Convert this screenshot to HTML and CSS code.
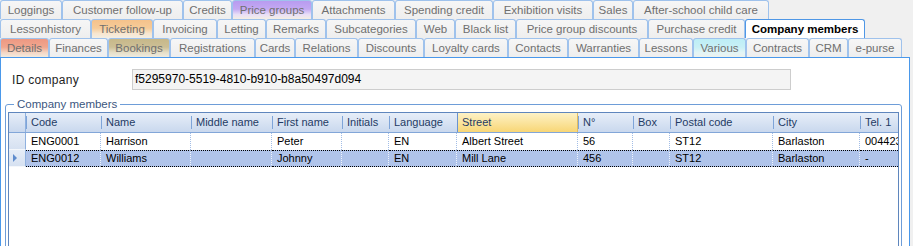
FILE: index.html
```html
<!DOCTYPE html>
<html lang="en">
<head>
    <meta charset="UTF-8">
    <title>Company members</title>
    <link rel="stylesheet" href="styles.css">
</head>
<body>

    <!-- tab strip, three rows -->
    <div class="tabs">
        <div class="tab-row row1">
            <div class="tab">Loggings</div>
            <div class="tab">Customer follow-up</div>
            <div class="tab">Credits</div>
            <div class="tab purple">Price groups</div>
            <div class="tab">Attachments</div>
            <div class="tab">Spending credit</div>
            <div class="tab">Exhibition visits</div>
            <div class="tab">Sales</div>
            <div class="tab">After-school child care</div>
        </div>
        <div class="tab-row row2">
            <div class="tab">Lessonhistory</div>
            <div class="tab orange">Ticketing</div>
            <div class="tab">Invoicing</div>
            <div class="tab">Letting</div>
            <div class="tab">Remarks</div>
            <div class="tab">Subcategories</div>
            <div class="tab">Web</div>
            <div class="tab">Black list</div>
            <div class="tab">Price group discounts</div>
            <div class="tab">Purchase credit</div>
            <div class="tab active">Company members</div>
        </div>
        <div class="tab-row row3">
            <div class="tab red">Details</div>
            <div class="tab">Finances</div>
            <div class="tab khaki">Bookings</div>
            <div class="tab">Registrations</div>
            <div class="tab">Cards</div>
            <div class="tab">Relations</div>
            <div class="tab">Discounts</div>
            <div class="tab">Loyalty cards</div>
            <div class="tab">Contacts</div>
            <div class="tab">Warranties</div>
            <div class="tab">Lessons</div>
            <div class="tab cyan">Various</div>
            <div class="tab">Contracts</div>
            <div class="tab">CRM</div>
            <div class="tab">e-purse</div>
        </div>
    </div>

    <div class="panel">
        <div class="field">
            <label class="field-label">ID company</label>
            <div class="textbox">f5295970-5519-4810-b910-b8a50497d094</div>
        </div>

        <fieldset class="group">
            <legend>Company members</legend>

            <div class="grid">
                <div class="grid-row head">
                    <div class="rh"></div>
                    <div class="hc">Code</div>
                    <div class="hc">Name</div>
                    <div class="hc">Middle name</div>
                    <div class="hc">First name</div>
                    <div class="hc">Initials</div>
                    <div class="hc">Language</div>
                    <div class="hc sorted">Street</div>
                    <div class="hc">N°</div>
                    <div class="hc">Box</div>
                    <div class="hc">Postal code</div>
                    <div class="hc">City</div>
                    <div class="hc">Tel. 1</div>
                </div>
                <div class="grid-row">
                    <div class="rh"></div>
                    <div class="c">ENG0001</div>
                    <div class="c">Harrison</div>
                    <div class="c"></div>
                    <div class="c">Peter</div>
                    <div class="c"></div>
                    <div class="c">EN</div>
                    <div class="c">Albert Street</div>
                    <div class="c">56</div>
                    <div class="c"></div>
                    <div class="c">ST12</div>
                    <div class="c">Barlaston</div>
                    <div class="c">0044235678</div>
                </div>
                <div class="grid-row selected">
                    <div class="rh"><span class="arrow"></span></div>
                    <div class="c">ENG0012</div>
                    <div class="c">Williams</div>
                    <div class="c"></div>
                    <div class="c">Johnny</div>
                    <div class="c"></div>
                    <div class="c">EN</div>
                    <div class="c">Mill Lane</div>
                    <div class="c">456</div>
                    <div class="c"></div>
                    <div class="c">ST12</div>
                    <div class="c">Barlaston</div>
                    <div class="c">-</div>
                </div>
            </div>
        </fieldset>
    </div>

</body>
</html>
```

FILE: styles.css
```css
body {
    margin: 0;
    width: 913px;
    height: 246px;
    overflow: hidden;
    background-color: #f0f0f0;
    font-family: "Liberation Sans", Arial, sans-serif;
}

/* tabs */
.tabs {
    height: 57px;
}

.tab-row {
    display: grid;
    height: 19px;
}

.row1 { grid-template-columns: 62px 121px 49px 80px 83px 98px 100px 40px 136px; }
.row2 { grid-template-columns: 91px 62px 64px 49px 60px 90px 39px 61px 132px 97px 120px; }
.row3 { grid-template-columns: 49px 59px 62px 85px 40px 63px 66px 84px 60px 71px 54px 53px 63px 39px 54px; }

.tab {
    box-sizing: border-box;
    height: 19px;
    border: 1px solid #9fc2ec;
    border-bottom: none;
    border-radius: 3px 3px 0 0;
    background: linear-gradient(#f6f6f6, #eeeeee);
    color: #6f6f6f;
    font-size: 11.5px;
    line-height: 18px;
    text-align: center;
    white-space: nowrap;
    overflow: hidden;
}

.tab.purple { background: linear-gradient(#b89bf0 0%, #c3a9f2 45%, #e9dff7 75%, #f4eee4 100%); }
.tab.orange { background: linear-gradient(#f5c28b 0%, #f6cb98 45%, #f8e6cf 75%, #f3eee4 100%); }
.tab.red    { background: linear-gradient(#ee9882 0%, #f0a68e 45%, #f5d6c4 75%, #f2ebdf 100%); }
.tab.khaki  { background: linear-gradient(#c7b889 0%, #ccbf96 45%, #e6dfc8 75%, #eeebe0 100%); }
.tab.cyan   { background: linear-gradient(#bdeef6 0%, #c8f0f6 45%, #e2f5f6 75%, #ecf2ef 100%); }

.tab.active {
    background: #ffffff;
    border-color: #4f97e6;
    color: #000000;
    font-weight: bold;
}

/* page panel */
.panel {
    box-sizing: border-box;
    width: 910px;
    height: 200px;
    border: 1px solid #4a98ea;
    background: #ffffff;
    padding: 11px 0 0 4px;
}

.field {
    display: flex;
    align-items: center;
    height: 21px;
}

.field-label {
    box-sizing: border-box;
    width: 127px;
    padding-left: 7px;
    font-size: 12px;
    color: #1e1e1e;
    letter-spacing: 0.3px;
}

.textbox {
    box-sizing: border-box;
    width: 659px;
    height: 21px;
    border: 1px solid #cdcdcd;
    background: #f4f4f4;
    padding-left: 2px;
    font-size: 12px;
    line-height: 19px;
    color: #000000;
}

/* group box */
.group {
    box-sizing: border-box;
    width: 897px;
    height: 220px;
    margin: 7px 0 0 0;
    padding: 0 2px;
    border: 1px solid #6e9dd8;
    border-radius: 3px;
}

.group legend {
    margin-left: 6px;
    padding: 0 3px;
    font-size: 11.5px;
    line-height: 14px;
    color: #3b5680;
}

/* data grid */
.grid {
    box-sizing: border-box;
    width: 891px;
    height: 200px;
    margin-top: 1px;
    border: 1px solid #5f86bd;
    background: #ffffff;
    overflow: hidden;
    font-size: 11px;
}

.grid-row {
    display: grid;
    grid-template-columns: 17px 75px 90px 81px 70px 47px 68px 121px 55px 37px 103px 87px 80px;
    height: 17px;
}

.grid-row.head {
    height: 20px;
    background: linear-gradient(#e7eef8, #c9d8ee);
    border-bottom: 1px solid #82a6d8;
    box-sizing: border-box;
}

.hc {
    position: relative;
    padding-left: 5px;
    line-height: 19px;
    color: #1f3b64;
    white-space: nowrap;
    overflow: hidden;
}

.hc::before {
    content: "";
    position: absolute;
    left: 0;
    top: 3px;
    bottom: 3px;
    width: 1px;
    background: #7ea4d8;
}

.hc.sorted {
    background: linear-gradient(#fdf2c6, #f8d676);
    border-left: 1px solid #6b93cf;
    border-right: 1px solid #e2bc62;
    padding-left: 4px;
}

.hc.sorted::before {
    display: none;
}

.rh {
    box-sizing: border-box;
    border-right: 1px solid #8fb1df;
    border-bottom: 1px solid #f4f7fb;
    background: linear-gradient(#e6edf7, #d6e1f1);
    display: flex;
    align-items: center;
    padding-left: 4px;
}

.head .rh {
    background: transparent;
    border-bottom: none;
}

.c {
    box-sizing: border-box;
    padding-left: 5px;
    border-right: 1px dotted #a2bde6;
    line-height: 16px;
    color: #000000;
    white-space: nowrap;
    overflow: hidden;
}

.selected .c {
    background: #b0c4ea;
    border-top: 1px dotted #000000;
    border-bottom: 1px dotted #000000;
    border-right-color: #eef3fb;
    line-height: 15px;
}

.arrow {
    width: 0;
    height: 0;
    border-top: 4px solid transparent;
    border-bottom: 4px solid transparent;
    border-left: 4px solid #5f8ccd;
}
```
